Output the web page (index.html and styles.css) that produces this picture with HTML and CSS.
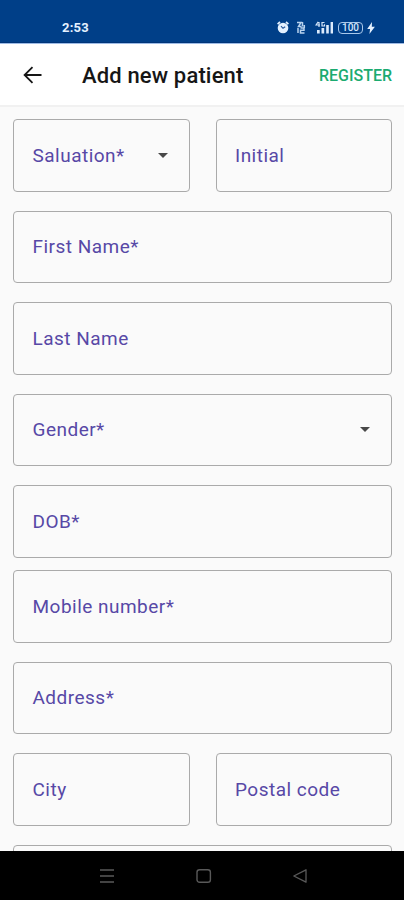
FILE: index.html
```html
<!DOCTYPE html>
<html lang="en">
<head>
<meta charset="utf-8">
<title>Add new patient</title>
<link rel="stylesheet" href="styles.css">
</head>
<body>
<div class="screen">
  <header class="status">
    <span class="time">2:53</span>
    <div class="indicators">
      <svg class="alarm" width="12" height="13" viewBox="0 0 12 13"><circle cx="6" cy="7" r="5.3" fill="#e4f1ff"/><path d="M.6 3.2 3 1M11.4 3.2 9 1" stroke="#e4f1ff" stroke-width="1.7"/><path d="M4 5.2 6 7.3 8.2 5.8" fill="none" stroke="#28589a" stroke-width="1.2"/></svg>
      <svg class="vibrate" width="10" height="13" viewBox="0 0 10 13" fill="none" stroke="#b9d3ee" stroke-width="1.5"><path d="M1 1.5H5L2.5 5.5H5.5M6.5 1V5.5M2 7V12M4.5 7H8V9.3H4.5V12H8.5M8.3 4V7"/></svg>
      <svg class="signal" width="19" height="13" viewBox="0 0 19 13"><path d="M3.2 .8 1 4H5M4 1V6M9.5 1.5H7V5H9.5V3.2" fill="none" stroke="#d5e6fa" stroke-width="1.2"/><path d="M2 9H4.7V12.5H2zM6.5 7H9.2V12.5H6.5zM11.2 4H13.8V12.5H11.2zM15.6 1H18V12.5H15.6z" fill="#dcebfc"/></svg>
      <span class="battery">100</span>
      <svg class="bolt" width="8" height="12" viewBox="0 0 8 12"><path d="M5 0 .2 6.9H3.1L2.4 12 7.9 4.7H4.8z" fill="#e4f1ff"/></svg>
    </div>
  </header>
  <div class="toolbar">
    <svg class="back" width="20" height="18" viewBox="0 0 20 18" fill="none" stroke="#161616" stroke-width="1.8"><path d="M18.5 9H1.6M9.5 1.2 1.6 9 9.5 16.8"/></svg>
    <h1 class="title">Add new patient</h1>
    <span class="register">REGISTER</span>
  </div>
  <main class="form">
    <div class="row">
      <div class="field"><span class="label">Saluation*</span><i class="caret"></i></div>
      <div class="field"><span class="label">Initial</span></div>
    </div>
    <div class="field"><span class="label">First Name*</span></div>
    <div class="field"><span class="label">Last Name</span></div>
    <div class="field"><span class="label">Gender*</span><i class="caret"></i></div>
    <div class="field dob"><span class="label">DOB*</span></div>
    <div class="field"><span class="label">Mobile number*</span></div>
    <div class="field"><span class="label">Address*</span></div>
    <div class="row">
      <div class="field"><span class="label">City</span></div>
      <div class="field"><span class="label">Postal code</span></div>
    </div>
    <div class="field"></div>
  </main>
  <nav class="navbar">
    <svg width="16" height="16" viewBox="0 0 16 16" stroke="#595959" stroke-width="1.3"><path d="M1 2H15M1 8H15M1 14H15"/></svg>
    <svg width="16" height="16" viewBox="0 0 16 16" fill="none" stroke="#595959" stroke-width="1.4"><rect x="1" y="1.7" width="13.4" height="12.6" rx="2.6"/></svg>
    <svg width="16" height="16" viewBox="0 0 16 16" fill="none" stroke="#595959" stroke-width="1.3" stroke-linejoin="round"><path d="M14 1.8V14.2L1.8 8z"/></svg>
  </nav>
</div>
</body>
</html>
```
FILE: styles.css
```css
* { box-sizing: border-box; }
body { margin: 0; font-family: Roboto, "Liberation Sans", sans-serif; }
.screen {
  width: 404px;
  height: 900px;
  display: flex;
  flex-direction: column;
  overflow: hidden;
  background: #fafafa;
}
.status {
  flex: none;
  height: 43px;
  padding: 13px 29px 0 62px;
  display: flex;
  justify-content: space-between;
  align-items: center;
  background: #003f88;
  border-bottom: 1px solid #003579;
}
.time { color: #e4f1ff; font-size: 13px; font-weight: 700; letter-spacing: .2px; }
.indicators { display: flex; align-items: center; }
.alarm { margin-right: 7px; }
.vibrate { margin-right: 9px; }
.signal { margin-right: 4px; }
.battery {
  width: 25px;
  height: 12px;
  margin-right: 4px;
  border: 1px solid #a9c8ea;
  border-radius: 4px;
  color: #d5e6fa;
  font-size: 10px;
  font-weight: 500;
  line-height: 10px;
  text-align: center;
}
.toolbar {
  flex: none;
  height: 64px;
  padding: 1px 12px 0 23px;
  display: flex;
  align-items: center;
  background: #fff;
  border-top: 1px solid #9dbbe5;
  border-bottom: 2px solid #f1f1f1;
}
.back { margin-right: 39px; }
.title { margin: 0; padding-top: 1px; flex: 1; font-size: 22px; font-weight: 500; letter-spacing: .15px; color: #161616; white-space: nowrap; }
.register { padding-top: 1px; font-size: 16px; font-weight: 500; color: #1bab70; }
.form {
  flex: 1;
  min-height: 0;
  overflow: hidden;
  padding: 12px 12px 0 13px;
  display: flex;
  flex-direction: column;
  gap: 19px;
}
.row { flex: none; display: grid; grid-template-columns: 1fr 1fr; gap: 26px; }
.field {
  flex: none;
  height: 72.5px;
  padding: 0 21px 0 18.5px;
  display: flex;
  align-items: center;
  justify-content: space-between;
  border: 1px solid #aaa;
  border-radius: 4px;
}
.dob { margin-bottom: -6.5px; }
.label { color: #5748a6; font-size: 19px; letter-spacing: .48px; white-space: nowrap; }
.caret { border: 5.5px solid transparent; border-top-color: #484848; border-bottom: 0; }
.navbar {
  flex: none;
  height: 49px;
  padding-left: 99px;
  display: flex;
  align-items: center;
  gap: 80.5px;
  background: #000;
}
```
